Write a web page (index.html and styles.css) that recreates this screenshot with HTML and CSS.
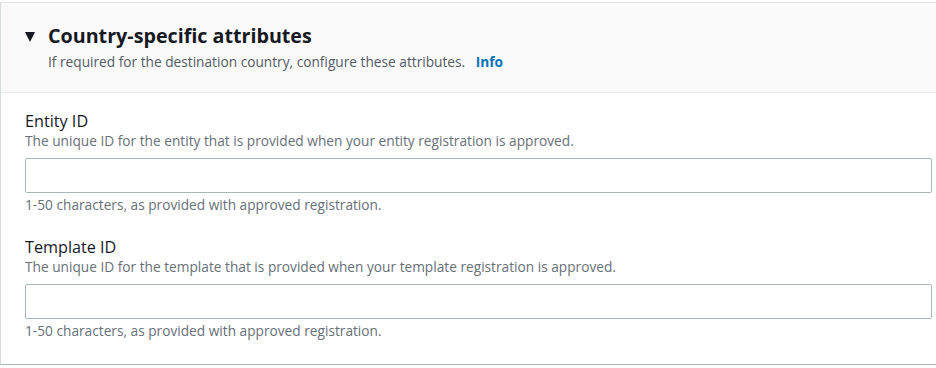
FILE: index.html
```html
<!DOCTYPE html>
<html lang="en">
<head>
    <meta charset="UTF-8">
    <meta name="viewport" content="width=device-width, initial-scale=1.0">
    <title>Country-specific attributes</title>
    <link rel="stylesheet" href="styles.css">
</head>
<body>
    <div class="panel">
        <!-- Header -->
        <div class="panel-header">
            <h2 class="panel-title">
                <span class="caret"></span>
                Country-specific attributes
            </h2>
            <p class="panel-desc">If required for the destination country, configure these attributes. <a href="#" class="info">Info</a></p>
        </div>

        <!-- Fields -->
        <div class="panel-body">
            <div class="field">
                <label class="field-label" for="entity-id">Entity ID</label>
                <p class="field-desc">The unique ID for the entity that is provided when your entity registration is approved.</p>
                <input class="field-input" id="entity-id" type="text">
                <p class="field-hint">1-50 characters, as provided with approved registration.</p>
            </div>

            <div class="field">
                <label class="field-label" for="template-id">Template ID</label>
                <p class="field-desc">The unique ID for the template that is provided when your template registration is approved.</p>
                <input class="field-input" id="template-id" type="text">
                <p class="field-hint">1-50 characters, as provided with approved registration.</p>
            </div>
        </div>
    </div>
</body>
</html>
```

FILE: styles.css
```css
body {
    margin: 0;
    padding-top: 2px;
    background-color: #ffffff;
    font-family: "Open Sans", Arial, sans-serif;
    color: #16191f;
    overflow: hidden;
}

.panel {
    box-sizing: border-box;
    width: 960px;
    background-color: #fff;
    border-top: 1px solid #e4e6e6;
    border-left: 1px solid #d5dbdb;
    border-bottom: 1px solid #aab7b8;
    box-shadow: 0 1px 1px rgba(0, 0, 0, 0.1);
}

.panel-header {
    background-color: #fafafa;
    border-bottom: 1px solid #eaeded;
    padding: 21px 28px 21px 24px;
}

.panel-title {
    display: flex;
    align-items: center;
    margin: 0;
    font-size: 19.7px;
    font-weight: 700;
    line-height: 24px;
}

.caret {
    width: 0;
    height: 0;
    border-left: 5.5px solid transparent;
    border-right: 5.5px solid transparent;
    border-top: 10px solid #16191f;
    margin-right: 13px;
    margin-top: 1px;
}

.panel-desc {
    margin: 4px 0 0 23px;
    font-size: 13.7px;
    line-height: 19px;
    color: #545b64;
}

.info {
    color: #0073bb;
    font-weight: 700;
    text-decoration: none;
    margin-left: 7px;
}

.panel-body {
    padding: 18px 28px 24px 24px;
}

.field {
    margin-bottom: 23px;
}

.field:last-child {
    margin-bottom: 0;
}

.field-label {
    display: block;
    font-size: 16.2px;
    line-height: 20px;
}

.field-desc,
.field-hint {
    margin: 0;
    font-size: 13.7px;
    line-height: 19px;
    color: #687078;
}

.field-input {
    display: block;
    box-sizing: border-box;
    width: 100%;
    height: 35px;
    margin: 8px 0 2px;
    border: 1px solid #aab7b8;
    border-radius: 2px;
    background: #fff;
}
```
